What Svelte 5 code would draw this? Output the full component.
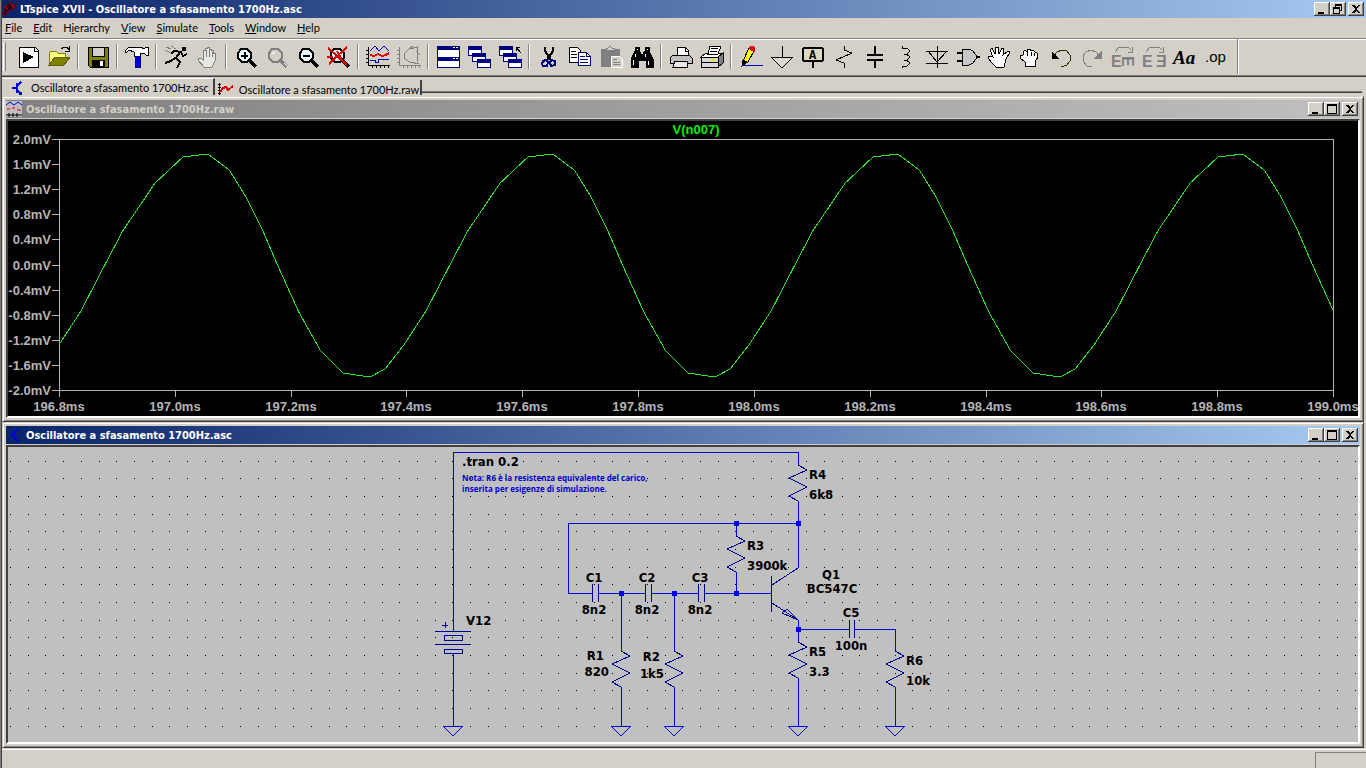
<script>
	const menus = [
		['', 'F', 'ile'],
		['', 'E', 'dit'],
		['H', 'i', 'erarchy'],
		['', 'V', 'iew'],
		['', 'S', 'imulate'],
		['', 'T', 'ools'],
		['', 'W', 'indow'],
		['', 'H', 'elp']
	];

	const K = '#000', W = '#fff', G = '#808080', B = '#000080', N = 'none';
	const lens = 'M7 4H13L17 8V13L13 17H8L4 13V8Z';
	const cascade = [
		['M1 2H14V10H1Z', W, B], ['M1 1H14V4H1Z', B, B],
		['M5 9H18V16H5Z', W, B], ['M5 8H18V11H5Z', B, B],
		['M10 15H23V22H10Z', W, B], ['M10 14H23V17H10Z', B, B]
	];

	// every shape is [path, fill, stroke, stroke width], on a 24 x 24 grid
	const tools = [
		{ name: 'Run', shapes: [['M3 2H19L22 5V22H3Z', W, K], ['M18 2V6H22', N, K], ['M7 7L18 12L7 18Z', K, N]] },
		{ name: 'Open', shapes: [['M2 20V8L4 6H9L11 8H18V12', '#ffff80', '#808000'], ['M2 20L8 12H23L17 20Z', '#808000', '#606000'], ['M14 4L17 2H20L22 5M22 1V6H18', N, K]] },
		'|',
		{ name: 'Save', shapes: [['M2 2H22V22H4L2 20Z', '#808000', K], ['M6 2H18V11H6Z', '#d4d0c8', K], ['M6 15H18V22H6Z', K, K], ['M14 16H17V21H14Z', W, N]] },
		'|',
		{ name: 'Control Panel', shapes: [['M0 6L4 2H16L19 4L21 2H23V10H21L19 8H15V11H9V7L4 5L1 8Z', W, K], ['M10 11H15V22H10Z', '#0000e0', '#000080']] },
		'|',
		{ name: 'Start', shapes: [['M18 2H21V5H18Z', K, K], ['M17 6L11 14M18 7L10 6L7 9M17 7L19 11L23 9M11 13L7 16L1 18M12 13L16 17L13 23', N, K, 2], ['M2 2L7 4M1 5L7 8M7 1L12 4', N, G]] },
		{ name: 'Halt', shapes: [['M9 22L3 15V13H6L8 15V5H10V3H12V2H14V4H16V5H18V8H20V16L17 22Z', '#e8e6e0', G], ['M11 5V12M14 5V12M17 7V12', N, G]] },
		'|',
		{ name: 'Zoom In', shapes: [[lens, '#e8ffff', K, 2], ['M16 16L22 22', N, K, 3], ['M7 11H14M11 7V14', N, K, 2]] },
		{ name: 'Pan', shapes: [[lens, '#d4d0c8', G, 2], ['M16 16L22 22', N, G, 3], ['M7 9L10 7M19 18L23 22', N, W]] },
		{ name: 'Zoom Out', shapes: [[lens, '#e8ffff', K, 2], ['M16 16L22 22', N, K, 3], ['M7 11H14', N, K, 2]] },
		{ name: 'Zoom Full', shapes: [[lens, '#c0ffff', K, 2], ['M16 16L22 22', N, K, 3], ['M1 3L20 20M20 2L2 19M0 12H6M10 6L16 17', N, '#e00000', 2]] },
		'|',
		{ name: 'Autorange', shapes: [['M2 2V20H24M0 5H2M0 9H2M0 13H2M0 17H2M6 20V23M10 20V23M14 20V23M18 20V23M22 20V23', N, K], ['M4 6L9 1L13 6L18 1L23 6', N, '#0000c0'], ['M4 10L8 11L12 9L16 11L20 10L23 8', N, '#e00000', 2], ['M4 15H9V17H12V14H23', N, '#0000c0']] },
		{ name: 'Smith', shapes: [['M2 2V20H24M0 5H2M0 9H2M0 13H2M0 17H2M6 20V23M10 20V23M14 20V23M18 20V23M22 20V23', N, G], ['M21 2L12 4L7 9L8 14L13 17L22 19M20 1V17M12 4L16 1M19 6L23 10', N, G]] },
		'|',
		{ name: 'Tile', shapes: [['M1 2H23V12H1Z', W, B], ['M1 1H23V4H1Z', B, B], ['M1 13H23V22H1Z', W, B], ['M1 12H23V15H1Z', B, B], ['M17 2H19V3H17ZM20 2H22V3H20ZM17 13H19V14H17ZM20 13H22V14H20Z', W, N]] },
		{ name: 'Cascade', shapes: cascade },
		{ name: 'Close All', shapes: [...cascade, ['M18 2H22M18 2V6M18 2L23 8', N, K]] },
		'|',
		{ name: 'Cut', shapes: [['M8 2V6L14 15M16 2V6L10 15', N, K, 2], ['M6 16L9 15L11 17L10 21H6L5 19ZM14 15L18 16V20L14 21L13 18Z', N, B, 2]] },
		{ name: 'Copy', shapes: [['M1 2H9L12 5V17H1Z', W, K], ['M3 6H8M3 9H9M3 12H9', N, K], ['M10 7H18L22 11V20H10Z', W, B], ['M12 11H17M12 14H20M12 17H20M18 7V11H22', N, B]] },
		{ name: 'Paste', shapes: [['M2 4H20V21H2Z', G, G], ['M7 5V3H9L11 1L13 3H15V5Z', '#d4d0c8', G], ['M12 11H20L23 14V22H12Z', '#d4d0c8', W], ['M14 14H18M14 17H21M14 19H21', N, G]] },
		{ name: 'Find', shapes: [['M5 2H9V6L11 9H13L15 6V2H19V6L23 14V22H16V15H8V22H1V14L5 6Z', K, K], ['M5 9V12M15 9V12M3 15V20M18 16V20M7 4H8M17 4H18', N, W]] },
		'|',
		{ name: 'Print', shapes: [['M8 10V2H16L19 5V10', W, K], ['M4 10H20L23 13V18H1V13Z', '#c0c0c0', K], ['M6 16H18V22H4Z', '#e8e8e8', K], ['M16 2V6H19', N, K]] },
		{ name: 'Print Setup', shapes: [['M1 12L6 8H23L18 12Z', W, K], ['M8 9L10 1H21L18 9Z', W, K], ['M11 3H18M10 6H17', N, K], ['M1 12H18V22H1Z', '#d8d8d8', K], ['M18 12L23 8V18L18 22Z', '#808080', K], ['M1 17H18', N, K], ['M11 14H15V16H11Z', '#e8e000', N]] },
		'|',
		{ name: 'Draw Wire', shapes: [['M5 14L10 3L15 6L9 17L4 20Z', '#ffff00', K], ['M10 3L12 1L15 2L16 5L15 7Z', '#e00000', '#e00000'], ['M4 15L8 17L3 21Z', K, K], ['M3 20H24', N, '#0000c0']] },
		{ name: 'Ground', shapes: [['M12 1V12M1 12H23L12 23Z', '#dcd9d2', K]] },
		{ name: 'Label Net', shapes: [['M3 3H21L22 4V15L21 16H3L2 15V4Z', '#dcd9c0', K, 2], ['M12 16V23', N, K, 2]], text: [['A', 8, 14, 12, 'mono']] },
		{ name: 'Resistor', shapes: [['M12 1V5L20 8L4 15L12 18V23', N, K]] },
		{ name: 'Capacitor', shapes: [['M12 1V10M12 15V23', N, K, 2], ['M4 10H20M4 15H20', N, K, 2]] },
		{ name: 'Inductor', shapes: [['M8 1V3H13L15 5V7L13 9H10M12 9L15 11V13L13 15H10M12 15L15 17V19L13 21H8V23', N, K]] },
		{ name: 'Diode', shapes: [['M12 1V23M1 6H23M3 6L12 17L22 6M1 18H23', N, K]] },
		{ name: 'Component', shapes: [['M6 4H13L17 6L20 10V14L17 18L13 20H6Z', '#c8c8c8', K], ['M1 8H6M1 16H6M20 12H24', N, K, 2]] },
		{ name: 'Move', shapes: [['M9 22L5 18L1 13V11H4L6 12L3 5L5 3L8 9L9 2H11L12 9L15 3L17 4L16 10L21 6L23 7L19 14L17 22Z', W, K]] },
		{ name: 'Drag', shapes: [['M7 21V17L2 13V11L5 10V7L7 5L9 7L10 4H12L13 6L15 5L17 7L19 8L20 12L17 17V21Z', W, K], ['M9 7V11M13 7V11M16 8V11', N, K]] },
		{ name: 'Undo', shapes: [['M4 12L8 7L13 5L18 6L21 10V16L18 20L12 22', N, '#303000'], ['M3 7V13H9Z', K, K]] },
		{ name: 'Redo', shapes: [['M20 12L16 7L11 5L6 7L3 11V16L7 21L12 22', N, G], ['M21 7V13H15Z', G, G]] },
		{ name: 'Rotate', shapes: [['M4 7L8 2H17L20 5M21 2V7H17', N, G]], text: [['E', 0, 22, 16, 'gray'], ['E', 11, -11, 16, 'gray', 'rotate(90)']] },
		{ name: 'Mirror', shapes: [['M4 7L8 2H17L20 5M21 2V7H17', N, G]], text: [['E', 0, 22, 16, 'gray'], ['Ǝ', 14, 22, 16, 'gray']] },
		{ name: 'Text', shapes: [], text: [['Aa', 0, 19, 19, 'serif']] },
		{ name: 'SPICE Directive', shapes: [], text: [['.op', 1, 17, 15, 'plain']] }
	];

	const sysIcons = {
		minimize: 'M3 9H9V11H3Z',
		maximize: 'M2 1H12V11H2ZM3 3V10H11V3Z',
		restore: 'M4 1H11V8H9V11H2V4H4ZM5 3V4H9V7H10V3ZM3 6V10H8V6Z',
		close: 'M3 2H5L7 4L9 2H11L8 6L11 10H9L7 8L5 10H3L6 6Z'
	};

	// plot pane
	let plotWidth = 1350;
	let plotHeight = 295;
	const tStart = 196.8, tEnd = 199, vMax = 2;
	const period = 0.5958;
	const cycle = [
		[0, -1.28], [0.038, -0.741], [0.079, -0.01], [0.11, 0.534], [0.166, 1.299], [0.214, 1.713],
		[0.257, 1.761], [0.294, 1.506], [0.323, 1.076], [0.35, 0.582], [0.375, 0.04], [0.414, -0.757],
		[0.451, -1.363], [0.49, -1.729], [0.537, -1.793], [0.563, -1.665]
	];
	const samples = [0, 1, 2, 3].flatMap((n) => cycle.map(([t, v]) => [tStart + n * period + t, v]));

	const left = 51, top = 18;
	$: right = plotWidth - 25;
	$: bottom = plotHeight - 26;
	$: px = (t) => left + ((t - tStart) / (tEnd - tStart)) * (right - left);
	$: py = (v) => top + ((vMax - v) / (2 * vMax)) * (bottom - top);
	$: trace = samples.map(([t, v]) => px(t).toFixed(1) + ',' + py(v).toFixed(1)).join(' ');
	const tTicks = Array.from({ length: 12 }, (_, i) => tStart + i * 0.2);
	const vTicks = Array.from({ length: 11 }, (_, i) => (20 - i * 4) / 10);

	// schematic pane
	let sheetWidth = 1350;
	let sheetHeight = 295;
	const pitch = 17.69;
	$: dots = gridDots(sheetWidth, sheetHeight);

	function gridDots(w, h) {
		let d = '';
		for (let y = 14; y < h - 6; y += pitch) {
			for (let x = 2.6; x < w; x += pitch) {
				d += `M${Math.floor(x)} ${Math.floor(y)}h1v1h-1z`;
			}
		}
		return d;
	}

	const wires = [
		'M445 184V5H790V18', 'M790 54V121', 'M790 76H560V146H584', 'M728 76V89', 'M728 125V146',
		'M590 146H637', 'M643 146H690', 'M696 146H763', 'M613 146V204', 'M666 146V204',
		'M613 240V279', 'M666 240V279', 'M790 173V195', 'M790 231V279', 'M790 182H841',
		'M846 182H887V204', 'M887 240V279', 'M445 206V279'
	];
	const resistors = [[790, 18], [728, 89], [613, 204], [666, 204], [790, 195], [887, 204]];
	const capacitors = [[584, 146, 6], [637, 146, 6], [690, 146, 6], [841, 182, 5]];
	const grounds = [445, 613, 666, 790, 887];
	const junctions = [[613, 146], [666, 146], [728, 146], [728, 76], [790, 76], [790, 182]];
	const labels = [
		['.tran 0.2', 454, 19], ['V12', 458, 178],
		['R4', 801, 32], ['6k8', 801, 52], ['R3', 739, 103], ['3900k', 739, 123],
		['C1', 586, 135, 'middle'], ['8n2', 586, 167, 'middle'],
		['C2', 639, 135, 'middle'], ['8n2', 639, 167, 'middle'],
		['C3', 692, 135, 'middle'], ['8n2', 692, 167, 'middle'],
		['Q1', 823, 132, 'middle'], ['BC547C', 824, 146, 'middle'],
		['C5', 843, 170, 'middle'], ['100n', 843, 203, 'middle'],
		['R5', 801, 209], ['3.3', 801, 229], ['R6', 898, 218], ['10k', 898, 238],
		['R1', 596, 213, 'end'], ['820', 601, 229, 'end'], ['R2', 652, 214, 'end'], ['1k5', 656, 231, 'end']
	];
</script>

{#snippet sysButtons(names)}
	<div class="sys">
		{#each names as name}
			<button class={name} aria-label={name}>
				<svg width="14" height="12" viewBox="0 0 14 12"><path d={sysIcons[name]} fill-rule="evenodd" /></svg>
			</button>
		{/each}
	</div>
{/snippet}

<main>
	<header class="titlebar app">
		<svg width="16" height="16" viewBox="0 0 16 16">
			<path d="M1 13L4 5L8 1L11 5L15 2L12 8L6 10L3 15Z" fill="#300018" stroke="#800010" />
			<path d="M2 5L6 8M9 3L12 7" stroke="#e00000" />
		</svg>
		<h1>LTspice XVII - Oscillatore a sfasamento 1700Hz.asc</h1>
		{@render sysButtons(['minimize', 'restore', 'close'])}
	</header>

	<nav class="menu">
		{#each menus as [before, key, after]}
			<button>{before}<u>{key}</u>{after}</button>
		{/each}
	</nav>

	<div class="toolbar">
		<i class="grip"></i>
		{#each tools as tool}
			{#if tool === '|'}
				<i class="sep"></i>
			{:else}
				<button aria-label={tool.name}>
					<svg width="24" height="24" viewBox="0 0 24 24">
						{#each tool.shapes as [d, fill, stroke, width]}
							<path {d} {fill} {stroke} stroke-width={width || 1} />
						{/each}
						{#each tool.text || [] as [text, x, y, size, kind, turn]}
							<text {x} {y} font-size={size} class={kind} transform={turn}>{text}</text>
						{/each}
					</svg>
				</button>
			{/if}
		{/each}
		<i class="sep end"></i>
	</div>

	<div class="tabs">
		<button class="tab active">
			<svg width="16" height="16" viewBox="0 0 16 16">
				<path d="M2 8H6M7 3V13M7 6L11 2M7 10L11 14" fill="none" stroke="#0000e0" stroke-width="2" />
				<path d="M12 11V15H8Z" fill="#0000e0" />
			</svg>
			Oscillatore a sfasamento 1700Hz.asc
		</button>
		<button class="tab">
			<svg width="16" height="16" viewBox="0 0 16 16">
				<path d="M1 1V13M0 2H3M0 5H3M0 8H3M0 11H3" fill="none" stroke="#000" />
				<path d="M2 10L5 6L8 5L10 8L15 4" fill="none" stroke="#e00000" stroke-width="2" />
			</svg>
			Oscillatore a sfasamento 1700Hz.raw
		</button>
		<span class="rest"></span>
	</div>

	<div class="mdi">
		<section class="child">
			<div class="titlebar idle">
				<svg width="16" height="16" viewBox="0 0 16 16">
					<path d="M0 0H16V16H0Z" fill="#c0c0c0" />
					<path d="M0 4L4 1L8 4L12 1L16 4" fill="none" stroke="#0000e0" />
					<path d="M1 8H4M6 7H9M11 9H15" stroke="#e00000" />
					<path d="M0 14H16M3 12V16M7 12V16M11 12V16" stroke="#000" />
				</svg>
				<h2>Oscillatore a sfasamento 1700Hz.raw</h2>
				{@render sysButtons(['minimize', 'maximize', 'close'])}
			</div>
			<div class="canvas plot" bind:clientWidth={plotWidth} bind:clientHeight={plotHeight}>
				<svg width={plotWidth} height={plotHeight}>
					<clipPath id="area"><rect x={left} y={top} width={right - left} height={bottom - top} /></clipPath>
					<rect class="axis" x={left} y={top} width={right - left} height={bottom - top} />
					{#each vTicks as v}
						<path class="axis" d="M{left - 7} {Math.round(py(v))}H{left}" />
						<text x={left - 8} y={Math.round(py(v)) + 5} text-anchor="end">{v.toFixed(1)}mV</text>
					{/each}
					{#each tTicks as t}
						<path class="axis" d="M{Math.round(px(t))} {bottom}V{bottom + 7}" />
						<text x={Math.round(px(t))} y={bottom + 21} text-anchor="middle">{t.toFixed(1)}ms</text>
					{/each}
					<text class="probe" x={(left + right) / 2} y="13" text-anchor="middle">V(n007)</text>
					<polyline class="trace" points={trace} clip-path="url(#area)" />
				</svg>
			</div>
		</section>

		<section class="child">
			<div class="titlebar">
				<svg width="16" height="16" viewBox="0 0 16 16">
					<path d="M4 8H7M8 4V12M8 6L11 3M8 10L12 14" fill="none" stroke="#0000e0" stroke-width="2" />
				</svg>
				<h2>Oscillatore a sfasamento 1700Hz.asc</h2>
				{@render sysButtons(['minimize', 'maximize', 'close'])}
			</div>
			<div class="canvas sheet" bind:clientWidth={sheetWidth} bind:clientHeight={sheetHeight}>
				<svg width={sheetWidth} height={sheetHeight}>
					<path d={dots} fill="#000" />
					{#each wires as d}
						<path class="wire" {d} />
					{/each}
					{#each resistors as [x, y]}
						<path class="part" d="M{x} {y}l9 5l-18 8l18 9l-18 9l9 5" />
					{/each}
					{#each capacitors as [x, y, gap]}
						<path class="part" d="M{x} {y - 9}v18m{gap} 0v-18" />
					{/each}
					{#each grounds as x}
						<path class="wire" d="M{x - 10} 279h20l-10 10z" />
					{/each}
					{#each junctions as [x, y]}
						<rect x={x - 2} y={y - 2} width="5" height="5" fill="#0000e8" />
					{/each}
					<!-- V12 battery -->
					<path class="part" d="M427 184H463M436 188H454V193H436ZM427 197H463M436 202H454V206H436ZM434 178H440M437 175V181" />
					<!-- Q1 -->
					<path class="part" d="M763 129V165M764 138L790 121M764 156L790 173M790 173L774 166L779 162Z" />
					{#each labels as [text, x, y, anchor]}
						<text {x} {y} text-anchor={anchor || 'start'}>{text}</text>
					{/each}
					<text class="note" x="454" y="34">Nota: R6 è la resistenza equivalente del carico,</text>
					<text class="note" x="454" y="45">inserita per esigenze di simulazione.</text>
				</svg>
			</div>
		</section>
	</div>

	<footer><span class="cell"></span></footer>
</main>

<style>
	:global(body) {
		margin: 0;
		background: #d4d0c8;
	}

	main {
		display: flex;
		flex-direction: column;
		box-sizing: border-box;
		min-height: 100vh;
		padding-left: 1px;
		border-left: 1px solid #808080;
		box-shadow: inset 1px 0 #404040;
		background: #d4d0c8;
		color: #000;
		font: 11px/14px "DejaVu Sans Condensed", "DejaVu Sans", sans-serif;
	}

	button {
		margin: 0;
		padding: 0;
		border: 0;
		background: none;
		color: inherit;
		font: inherit;
	}

	svg {
		display: block;
		flex: none;
	}

	.titlebar {
		display: flex;
		align-items: center;
		height: 18px;
		padding-right: 2px;
		gap: 4px;
		background: linear-gradient(to right, #0a246a, #a6caf0);
		color: #fff;
	}

	.titlebar.app {
		gap: 2px;
	}

	.titlebar.idle {
		background: linear-gradient(to right, #808080, #c0c0c0);
		color: #d4d0c8;
	}

	h1, h2 {
		flex: 1;
		margin: 0;
		padding-top: 2px;
		font-size: 11px;
		font-weight: bold;
		white-space: nowrap;
	}

	.sys {
		display: flex;
	}

	.sys button {
		box-sizing: border-box;
		width: 16px;
		height: 14px;
		padding: 1px;
		background: #d4d0c8;
		box-shadow: inset -1px -1px #404040, inset 1px 1px #fff, inset -2px -2px #808080;
	}

	.sys .close {
		margin-left: 2px;
	}

	.sys svg, .toolbar svg, .tabs svg {
		shape-rendering: crispEdges;
	}

	.menu, .tabs {
		font-family: Lato, sans-serif;
	}

	.menu {
		display: flex;
		align-items: center;
		gap: 11px;
		height: 20px;
		padding-left: 3px;
	}

	.toolbar {
		display: flex;
		align-items: center;
		height: 35px;
		border-top: 1px solid #808080;
		border-bottom: 1px solid #404040;
		box-shadow: inset 0 1px #fff, inset 0 -1px #808080;
		padding-bottom: 2px;
	}

	.toolbar button {
		display: flex;
		justify-content: center;
		width: 31px;
	}

	.toolbar svg {
		overflow: visible;
	}

	.grip {
		width: 1px;
		height: 28px;
		margin: 0 6px 0 1px;
		border-left: 1px solid #fff;
		border-right: 1px solid #808080;
	}

	.sep {
		box-sizing: border-box;
		width: 2px;
		height: 25px;
		margin: 0 3px;
		border-left: 1px solid #808080;
		border-right: 1px solid #fff;
	}

	.sep.end {
		height: 35px;
		margin-left: 6px;
	}

	.toolbar .mono {
		font-family: "Liberation Mono", monospace;
		font-weight: bold;
	}

	.toolbar .serif {
		font-family: "Liberation Serif", serif;
		font-style: italic;
		font-weight: bold;
	}

	.toolbar .plain {
		font-family: "Liberation Sans", sans-serif;
	}

	.toolbar .gray {
		font-family: "Liberation Sans", sans-serif;
		font-weight: bold;
		fill: #808080;
	}

	.tabs {
		display: flex;
		height: 19px;
		padding-right: 4px;
	}

	.tab {
		display: flex;
		box-sizing: border-box;
		align-items: center;
		gap: 5px;
		height: 15px;
		margin-top: 3px;
		padding: 4px 1px 0 3px;
		border-right: 2px solid #404040;
		white-space: nowrap;
	}

	.tab.active {
		height: 17px;
		margin-top: 1px;
		padding: 2px 4px 0 8px;
		border-top: 1px solid #fff;
	}

	.rest {
		flex: 1;
		height: 15px;
		border-bottom: 1px solid #404040;
		box-shadow: inset 0 -1px #808080;
	}

	.mdi {
		display: flex;
		flex: 1;
		flex-direction: column;
		padding-right: 2px;
	}

	.child {
		display: flex;
		flex: 1;
		flex-direction: column;
		gap: 1px;
		padding: 3px;
		border: 1px solid;
		border-color: #d4d0c8 #404040 #404040 #d4d0c8;
		box-shadow: inset 1px 1px #fff, inset -1px -1px #808080;
	}

	.canvas {
		flex: 1;
		contain: size;
		min-height: 295px;
		overflow: hidden;
		border: 2px solid;
		border-color: #404040 #fff #fff #404040;
	}

	.plot {
		background: #000;
	}

	.plot text {
		fill: #b4b4b4;
		font: bold 13px "Liberation Sans", Arial, sans-serif;
	}

	.plot .probe {
		fill: #00f000;
	}

	.axis {
		fill: none;
		stroke: #b4b4b4;
		shape-rendering: crispEdges;
	}

	.trace {
		fill: none;
		stroke: #30e030;
		shape-rendering: crispEdges;
	}

	.sheet {
		background: #c0c0c0;
	}

	.wire, .part {
		fill: none;
		stroke: #0000e0;
		shape-rendering: crispEdges;
	}

	.part {
		stroke: #000090;
	}

	.sheet text {
		font-size: 13px;
		font-weight: bold;
	}

	.sheet .note {
		fill: #0000d0;
		font-family: "Open Sans", sans-serif;
		font-size: 8px;
	}

	footer {
		display: flex;
		justify-content: flex-end;
		height: 18px;
		margin-top: 1px;
		border-top: 1px solid #fff;
	}

	.cell {
		width: 50px;
		margin-top: 2px;
		border-top: 1px solid #808080;
		border-left: 1px solid #808080;
	}
</style>
